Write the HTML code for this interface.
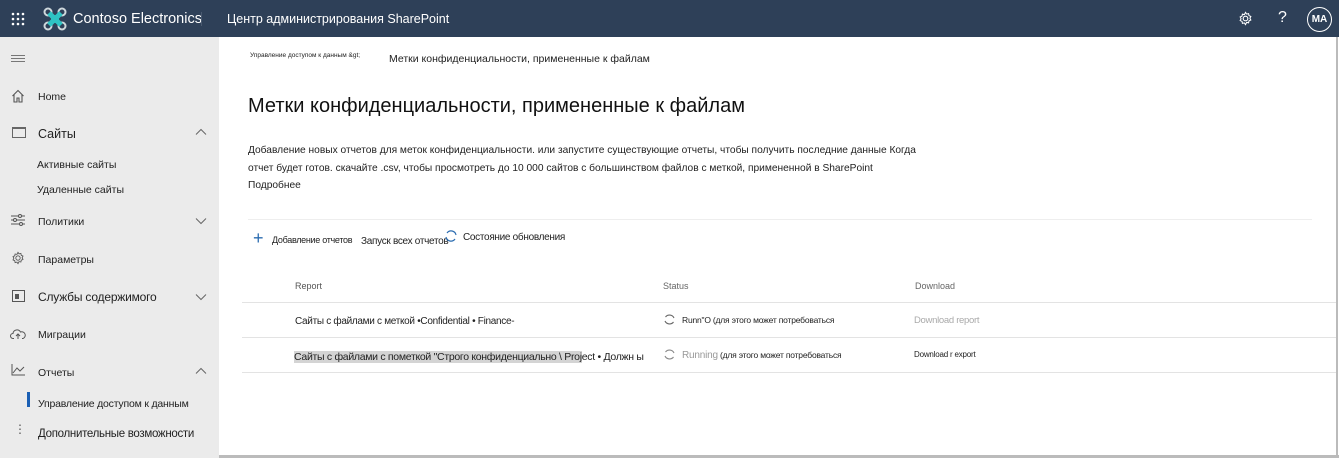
<!DOCTYPE html>
<html><head><meta charset="utf-8"><style>
*{margin:0;padding:0;box-sizing:border-box}
body{width:1339px;height:458px;overflow:hidden;font-family:"Liberation Sans","Noto Sans CJK SC",sans-serif;background:#fff;position:relative;color:#222}
.top{position:absolute;left:0;top:0;width:1339px;height:37px;background:#2e4058;color:#fff}
.side{position:absolute;left:0;top:37px;width:219px;height:421px;background:#ebebeb}
.t{position:absolute;white-space:nowrap}
.nav{font-size:12px;color:#222}
.ic{position:absolute}
.line{position:absolute;height:1px;background:#e3e3e3}
</style></head><body>
<div class="top">
 <svg class="t" style="left:11px;top:12px" width="14" height="14"><g fill="#fff"><circle cx="2" cy="2" r="1.3"/><circle cx="7" cy="2" r="1.3"/><circle cx="12" cy="2" r="1.3"/><circle cx="2" cy="7" r="1.3"/><circle cx="7" cy="7" r="1.3"/><circle cx="12" cy="7" r="1.3"/><circle cx="2" cy="12" r="1.3"/><circle cx="7" cy="12" r="1.3"/><circle cx="12" cy="12" r="1.3"/></g></svg>
 <svg class="t" style="left:43px;top:7px" width="24" height="24"><g fill="none" stroke="#cfd8dc" stroke-width="2"><circle cx="5" cy="5" r="3.5"/><circle cx="19" cy="5" r="3.5"/><circle cx="5" cy="19" r="3.5"/><circle cx="19" cy="19" r="3.5"/></g><path d="M6 6 L18 18 M18 6 L6 18" stroke="#2ec4c4" stroke-width="5"/><circle cx="12" cy="12" r="4" fill="#2ec4c4"/></svg>
 <div class="t" style="left:73px;top:11px;font-size:14.5px">Contoso Electronics</div>
 <div class="t" style="left:201px;top:12px;width:1px;height:14px;background:#4a5a70"></div>
 <div class="t" style="left:227px;top:12px;font-size:12.5px">Центр администрирования SharePoint</div>
 <svg class="t" style="left:1238px;top:11px" width="15" height="15" viewBox="0 0 16 16"><circle cx="8" cy="8" r="2.5" fill="none" stroke="#fff" stroke-width="1.2"/><path d="M8 1.5l1.2 1.8 2.1-.5.4 2.1 2 .9-1 1.9 1 1.9-2 .9-.4 2.1-2.1-.5L8 14.5l-1.2-1.8-2.1.5-.4-2.1-2-.9 1-1.9-1-1.9 2-.9.4-2.1 2.1.5z" fill="none" stroke="#fff" stroke-width="1.1"/></svg>
 <div class="t" style="left:1278px;top:9px;font-size:16px">?</div>
 <div class="t" style="left:1307px;top:7px;width:25px;height:25px;border:1px solid #fff;border-radius:50%;font-size:10px;font-weight:bold;text-align:center;line-height:23px">MA</div>
</div>
<div class="side">
 <div class="t" style="left:11px;top:18px;width:14px;height:1px;background:#777;box-shadow:0 3px 0 #777,0 6px 0 #777"></div>
 <svg class="ic" style="left:11px;top:52px" width="14" height="14"><path d="M1.5 7L7 1.5 12.5 7M3 5.5V13h3V9h2v4h3V5.5" fill="none" stroke="#555" stroke-width="1.1"/></svg><div class="t nav" style="left:38px;top:91px;top:54px;font-size:10.5px">Home</div>
 <div class="t" style="left:12px;top:90px;width:14px;height:11px;border:1.3px solid #666;border-top-width:2.5px"></div><div class="t nav" style="left:38px;top:90px;font-size:12.5px">Сайты</div>
 <svg class="ic" style="left:195px;top:91px" width="12" height="8"><path d="M1 6.5L6 1.5 11 6.5" fill="none" stroke="#666"/></svg>
 <div class="t nav" style="left:37px;top:122px;font-size:10.5px">Активные сайты</div>
 <div class="t nav" style="left:37px;top:147px;font-size:10.5px">Удаленные сайты</div>
 <svg class="ic" style="left:11px;top:177px" width="14" height="12"><path d="M0 2h14M0 6h14M0 10h14" stroke="#555"/><circle cx="9" cy="2" r="1.5" fill="#ebebeb" stroke="#555"/><circle cx="4" cy="6" r="1.5" fill="#ebebeb" stroke="#555"/><circle cx="10" cy="10" r="1.5" fill="#ebebeb" stroke="#555"/></svg><div class="t nav" style="left:38px;top:179px;font-size:10.5px">Политики</div>
 <svg class="ic" style="left:195px;top:180px" width="12" height="8"><path d="M1 1.5L6 6.5 11 1.5" fill="none" stroke="#666"/></svg>
 <svg class="ic" style="left:11px;top:214px" width="14" height="14" viewBox="0 0 16 16"><circle cx="8" cy="8" r="2.5" fill="none" stroke="#555"/><path d="M8 1.5l1.2 1.8 2.1-.5.4 2.1 2 .9-1 1.9 1 1.9-2 .9-.4 2.1-2.1-.5L8 14.5l-1.2-1.8-2.1.5-.4-2.1-2-.9 1-1.9-1-1.9 2-.9.4-2.1 2.1.5z" fill="none" stroke="#555"/></svg><div class="t nav" style="left:38px;top:217px;font-size:10.5px">Параметры</div>
 <div class="t" style="left:12px;top:253px;width:13px;height:12px;border:1.3px solid #555"></div><div class="t" style="left:15px;top:257px;width:4px;height:5px;background:#555"></div>
 <div class="t nav" style="left:38px;top:253px;font-size:12px;letter-spacing:-0.2px">Службы содержимого</div>
 <svg class="ic" style="left:195px;top:256px" width="12" height="8"><path d="M1 1.5L6 6.5 11 1.5" fill="none" stroke="#666"/></svg>
 <svg class="ic" style="left:10px;top:291px" width="16" height="12"><path d="M4 10.5H3a2.5 2.5 0 010-5 4 4 0 017.5-1.5A3 3 0 0113 10.5h-1M8 11V6M6 8l2-2 2 2" fill="none" stroke="#555"/></svg><div class="t nav" style="left:38px;top:292px;font-size:10.5px">Миграции</div>
 <svg class="ic" style="left:11px;top:327px" width="14" height="12"><path d="M1 0V11H14M2 9L6 4 9 7 13 3" fill="none" stroke="#555"/></svg><div class="t nav" style="left:38px;top:330px;font-size:10.5px">Отчеты</div>
 <svg class="ic" style="left:195px;top:330px" width="12" height="8"><path d="M1 6.5L6 1.5 11 6.5" fill="none" stroke="#666"/></svg>
 <div class="t" style="left:27px;top:355px;width:3px;height:15px;background:#1a5fb4"></div><div class="t nav" style="left:38px;top:361px;font-size:10.5px;letter-spacing:-0.2px">Управление доступом к данным</div>
 <div class="ic" style="left:14px;top:385px;font-size:12px;color:#555">⋮</div><div class="t nav" style="left:38px;top:391px;font-size:11.5px;letter-spacing:-0.3px">Дополнительные возможности</div>
</div>
<div class="t" style="left:1336px;top:37px;width:2px;height:421px;background:#bbb"></div>
<div class="t" style="left:219px;top:455px;width:1120px;height:3px;background:#bbb"></div>
<div class="t" style="left:250px;top:52px;font-size:6.5px">Управление доступом к данным &amp;gt;</div>
<div class="t" style="left:389px;top:53px;font-size:10.5px">Метки конфиденциальности, примененные к файлам</div>
<div class="t" style="left:248px;top:95px;font-size:20px;color:#111">Метки конфиденциальности, примененные к файлам</div>
<div class="t" style="left:248px;top:142px;font-size:10.2px;line-height:17.5px">Добавление новых отчетов для меток конфиденциальности. или запустите существующие отчеты, чтобы получить последние данные Когда<br>отчет будет готов. скачайте .csv, чтобы просмотреть до 10 000 сайтов с большинством файлов с меткой, примененной в SharePoint<br>Подробнее</div>
<div class="line" style="left:248px;top:219px;width:1064px;background:#eee"></div>
<div class="t" style="left:253px;top:228px;font-size:18px;color:#2b6cb0;font-weight:300">+</div>
<div class="t" style="left:272px;top:235px;font-size:9px;letter-spacing:-0.3px">Добавление отчетов</div>
<div class="t" style="left:361px;top:236px;font-size:10px;letter-spacing:-0.3px">Запуск всех отчетов</div>
<svg class="t" style="left:444px;top:229px" width="14" height="14"><path d="M3 4A5 5 0 0112 6M11 10A5 5 0 012 8" fill="none" stroke="#2b6cb0" stroke-width="1.2"/></svg>
<div class="t" style="left:463px;top:232px;font-size:10px;letter-spacing:-0.3px">Состояние обновления</div>
<div class="t" style="left:295px;top:281px;font-size:9px;color:#555">Report</div>
<div class="t" style="left:663px;top:281px;font-size:9px;color:#666">Status</div>
<div class="t" style="left:915px;top:281px;font-size:9px;color:#666">Download</div>
<div class="line" style="left:242px;top:302px;width:1094px"></div>
<div class="t" style="left:295px;top:316px;font-size:10px;letter-spacing:-0.3px">Сайты с файлами с меткой •Confidential • Finance-</div>
<svg class="t" style="left:663px;top:313px" width="13" height="13"><path d="M2.5 4A5 5 0 0111 5M10.5 9A5 5 0 012 8" fill="none" stroke="#666" stroke-width="1.1"/></svg>
<div class="t" style="left:682px;top:315px;font-size:8.5px;letter-spacing:-0.2px">Runn"O (для этого может потребоваться</div>
<div class="t" style="left:914px;top:315px;font-size:9.5px;color:#aaa;letter-spacing:-0.3px">Download report</div>
<div class="line" style="left:242px;top:337px;width:1094px"></div>
<div class="t" style="left:294px;top:351px;font-size:10.5px;letter-spacing:-0.3px"><span style="background:#d4d4d4">Сайты с файлами с пометкой "Строго конфиденциально \ Proj</span>ect • Должн ы</div>
<svg class="t" style="left:663px;top:348px" width="13" height="13"><path d="M2.5 4A5 5 0 0111 5M10.5 9A5 5 0 012 8" fill="none" stroke="#888" stroke-width="1.1"/></svg>
<div class="t" style="left:682px;top:350px;font-size:8.5px;letter-spacing:-0.2px"><span style="color:#999;font-size:10px">Running</span> (для этого может потребоваться</div>
<div class="t" style="left:914px;top:350px;font-size:8px;letter-spacing:-0.2px">Download r export</div>
<div class="line" style="left:242px;top:372px;width:1094px"></div>
</body></html>
